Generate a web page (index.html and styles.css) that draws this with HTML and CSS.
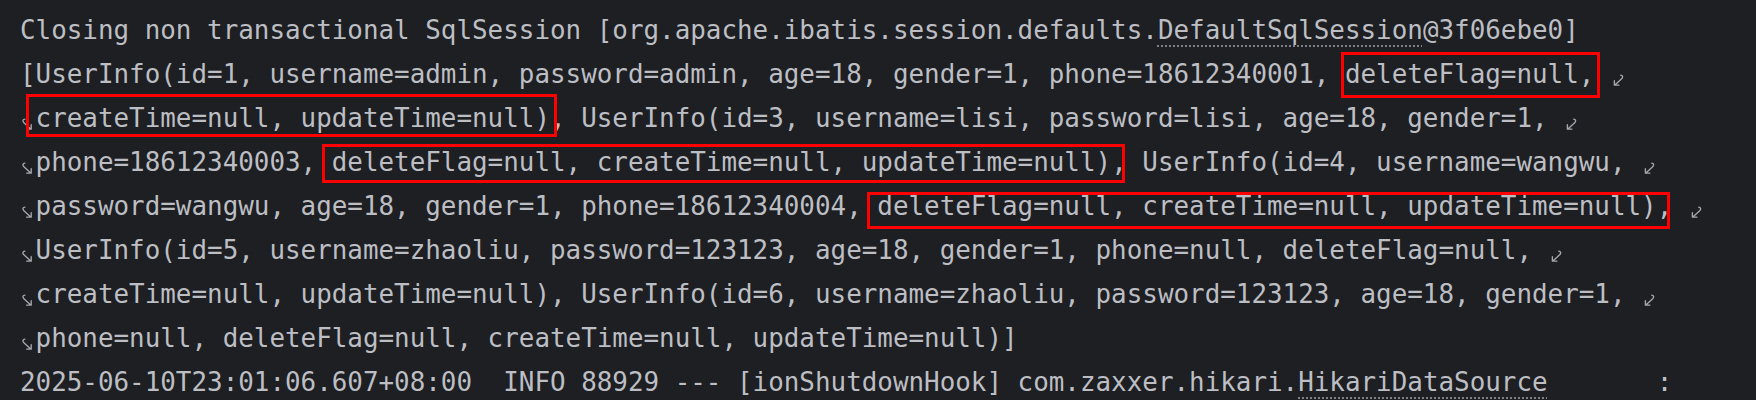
FILE: index.html
```html
<!DOCTYPE html>
<html lang="en">
<head>
  <meta charset="UTF-8">
  <title>Run console</title>
  <link rel="stylesheet" href="styles.css">
</head>
<body>

<div class="console">
  <div class="line">Closing non transactional SqlSession [org.apache.ibatis.session.defaults.<span class="link">DefaultSqlSession</span>@3f06ebe0]</div>
  <div class="line">[UserInfo(id=1, username=admin, password=admin, age=18, gender=1, phone=18612340001, <span class="mark mark-1">deleteFlag=null,</span> <svg class="wrap" viewBox="0 0 16 14"><path d="M11 1.5c2.2 0 2.6 2.2 1 3.6L5 11.5M4.5 7.2v4.6h4.6"/></svg></div>
  <div class="line"><svg class="wrap" viewBox="0 0 16 14"><path d="M5 1.5c-2.2 0-2.6 2.2-1 3.6l7 6.4M11.5 7.2v4.6H6.9"/></svg><span class="mark mark-2">createTime=null, updateTime=null)</span>, UserInfo(id=3, username=lisi, password=lisi, age=18, gender=1, <svg class="wrap" viewBox="0 0 16 14"><path d="M11 1.5c2.2 0 2.6 2.2 1 3.6L5 11.5M4.5 7.2v4.6h4.6"/></svg></div>
  <div class="line"><svg class="wrap" viewBox="0 0 16 14"><path d="M5 1.5c-2.2 0-2.6 2.2-1 3.6l7 6.4M11.5 7.2v4.6H6.9"/></svg>phone=18612340003, <span class="mark mark-3">deleteFlag=null, createTime=null, updateTime=null)</span>, UserInfo(id=4, username=wangwu, <svg class="wrap" viewBox="0 0 16 14"><path d="M11 1.5c2.2 0 2.6 2.2 1 3.6L5 11.5M4.5 7.2v4.6h4.6"/></svg></div>
  <div class="line"><svg class="wrap" viewBox="0 0 16 14"><path d="M5 1.5c-2.2 0-2.6 2.2-1 3.6l7 6.4M11.5 7.2v4.6H6.9"/></svg>password=wangwu, age=18, gender=1, phone=18612340004, <span class="mark mark-4">deleteFlag=null, createTime=null, updateTime=null)</span>, <svg class="wrap" viewBox="0 0 16 14"><path d="M11 1.5c2.2 0 2.6 2.2 1 3.6L5 11.5M4.5 7.2v4.6h4.6"/></svg></div>
  <div class="line"><svg class="wrap" viewBox="0 0 16 14"><path d="M5 1.5c-2.2 0-2.6 2.2-1 3.6l7 6.4M11.5 7.2v4.6H6.9"/></svg>UserInfo(id=5, username=zhaoliu, password=123123, age=18, gender=1, phone=null, deleteFlag=null, <svg class="wrap" viewBox="0 0 16 14"><path d="M11 1.5c2.2 0 2.6 2.2 1 3.6L5 11.5M4.5 7.2v4.6h4.6"/></svg></div>
  <div class="line"><svg class="wrap" viewBox="0 0 16 14"><path d="M5 1.5c-2.2 0-2.6 2.2-1 3.6l7 6.4M11.5 7.2v4.6H6.9"/></svg>createTime=null, updateTime=null), UserInfo(id=6, username=zhaoliu, password=123123, age=18, gender=1, <svg class="wrap" viewBox="0 0 16 14"><path d="M11 1.5c2.2 0 2.6 2.2 1 3.6L5 11.5M4.5 7.2v4.6h4.6"/></svg></div>
  <div class="line"><svg class="wrap" viewBox="0 0 16 14"><path d="M5 1.5c-2.2 0-2.6 2.2-1 3.6l7 6.4M11.5 7.2v4.6H6.9"/></svg>phone=null, deleteFlag=null, createTime=null, updateTime=null)]</div>
  <div class="line">2025-06-10T23:01:06.607+08:00  INFO 88929 --- [ionShutdownHook] com.zaxxer.hikari.<span class="link">HikariDataSource</span>       :</div>
</div>

</body>
</html>
```

FILE: styles.css
```css
body { margin: 0; background: #1e1f22; }
.console { padding: 8px 0 0 20px; height: 392px; overflow: hidden; font-family: "DejaVu Sans Mono", monospace; font-size: 25.9px; color: #bcbec4; }
.line { height: 44px; line-height: 44px; white-space: pre; }
.link { text-decoration: underline dotted #7d8087; text-decoration-thickness: 1.5px; text-underline-offset: 6px; }
.wrap { width: 1ch; height: 15px; vertical-align: -5px; fill: none; stroke: #a4a7ad; stroke-width: 1.4; stroke-linecap: round; stroke-linejoin: round; }

.mark { position: relative; }
.mark::before { content: ""; position: absolute; border: 3px solid #ff0000; }
.mark-1::before { top: -7px; bottom: -9px; left: -4px; right: -6px; }
.mark-2::before { top: -9px; bottom: -4px; left: -10px; right: -7px; }
.mark-3::before { top: -3px; bottom: -6px; left: -10px; right: -14px; }
.mark-4::before { top: 1px; bottom: -8px; left: -10px; right: -13px; }
```
